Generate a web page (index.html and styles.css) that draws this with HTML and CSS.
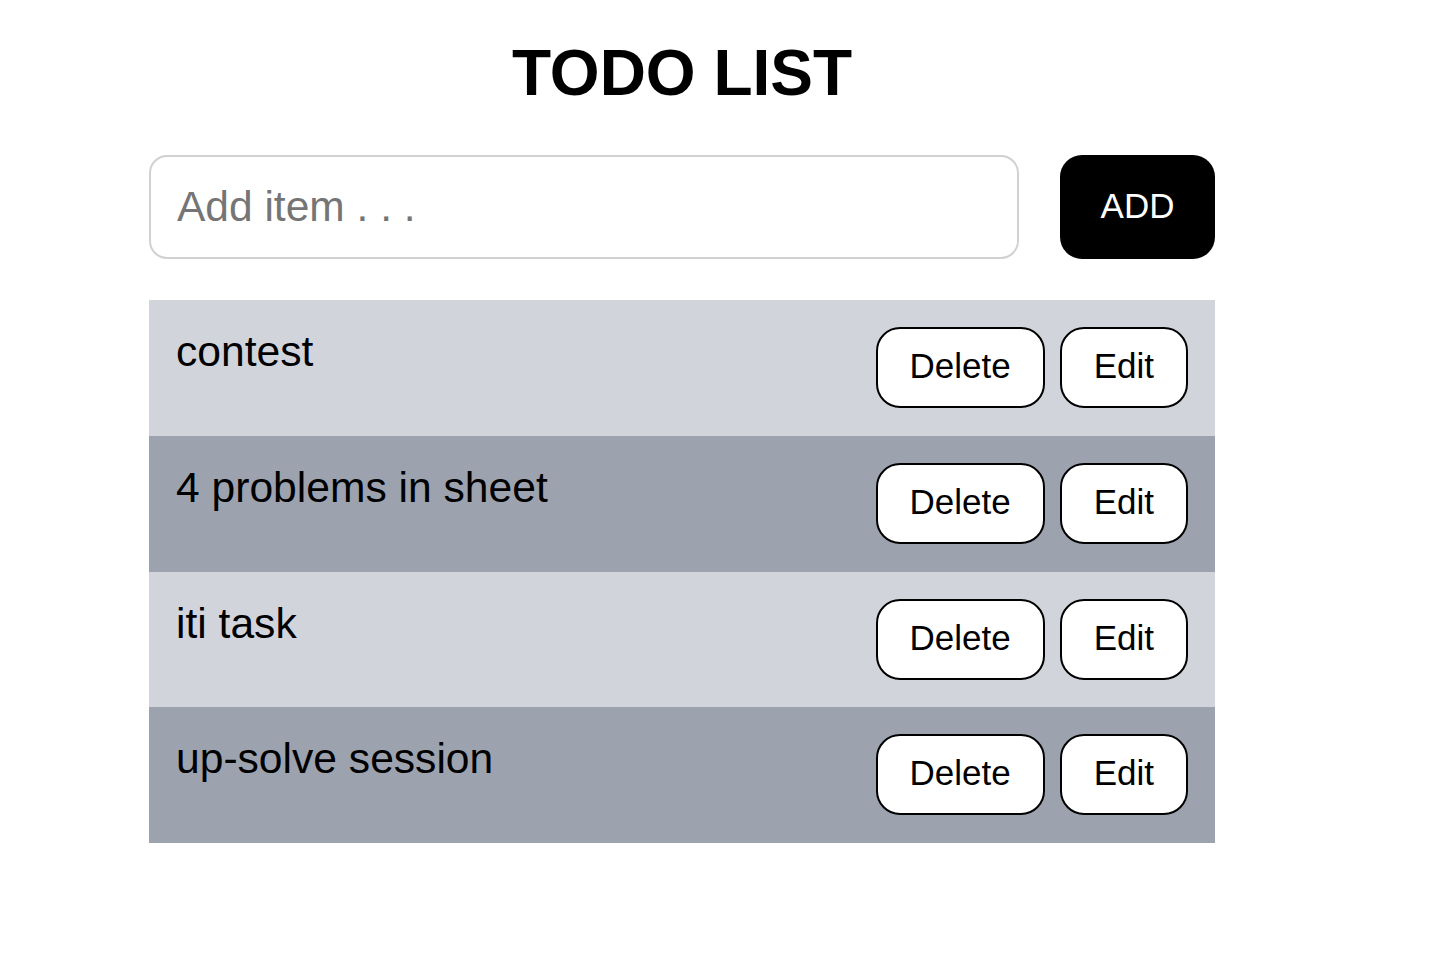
FILE: index.html
```html
<!DOCTYPE html>
<html lang="en">
<head>
<meta charset="utf-8">
<title>Todo List</title>
<link rel="stylesheet" href="styles.css">
</head>
<body>
<main class="app">
  <h1 class="title">TODO LIST</h1>
  <form class="add-form">
    <input class="add-input" type="text" placeholder="Add item . . .">
    <button class="add-btn" type="button">ADD</button>
  </form>
  <ul class="list">
    <li class="item item-light">
      <span class="item-text">contest</span>
      <div class="actions"><button class="btn" type="button">Delete</button><button class="btn" type="button">Edit</button></div>
    </li>
    <li class="item item-dark">
      <span class="item-text">4 problems in sheet</span>
      <div class="actions"><button class="btn" type="button">Delete</button><button class="btn" type="button">Edit</button></div>
    </li>
    <li class="item item-light">
      <span class="item-text">iti task</span>
      <div class="actions"><button class="btn" type="button">Delete</button><button class="btn" type="button">Edit</button></div>
    </li>
    <li class="item item-dark">
      <span class="item-text">up-solve session</span>
      <div class="actions"><button class="btn" type="button">Delete</button><button class="btn" type="button">Edit</button></div>
    </li>
  </ul>
</main>
</body>
</html>
```
FILE: styles.css
```css
* { box-sizing: border-box; }
body {
  margin: 0;
  background: #fff;
  font-family: "Liberation Sans", Arial, sans-serif;
  color: #000;
}
.app {
  width: 1066px;
  margin-left: 149px;
  padding-top: 36px;
}
.title {
  margin: 0 0 45px;
  font-size: 64px;
  font-weight: 700;
  text-align: center;
  line-height: 74px;
}
.add-form {
  display: flex;
  gap: 41px;
  height: 104px;
}
.add-input {
  flex: 1;
  height: 104px;
  border: 2px solid #d1d1d1;
  border-radius: 18px;
  padding: 0 26px;
  font-family: inherit;
  font-size: 42.5px;
  color: #000;
  outline: none;
}
.add-input::placeholder { color: #757575; }
.add-btn {
  width: 155px;
  height: 104px;
  border: none;
  border-radius: 22px;
  background: #000;
  color: #fff;
  font-family: inherit;
  font-size: 35px;
  padding: 0 0 3px;
}
.list {
  list-style: none;
  margin: 41px 0 0;
  padding: 0;
}
.item {
  display: flex;
  justify-content: space-between;
  align-items: flex-start;
  height: 135.75px;
  padding: 27px 27px 0;
}
.item-light { background: #d1d5db; }
.item-dark { background: #9ca3af; }
.item-text {
  font-size: 42.6px;
  line-height: 48px;
}
.actions {
  display: flex;
  gap: 15px;
}
.btn {
  background: #fff;
  border: 2px solid #000;
  border-radius: 24px;
  padding: 16px 32px 20px;
  font-family: inherit;
  font-size: 35px;
  line-height: 41px;
  color: #000;
}
```
